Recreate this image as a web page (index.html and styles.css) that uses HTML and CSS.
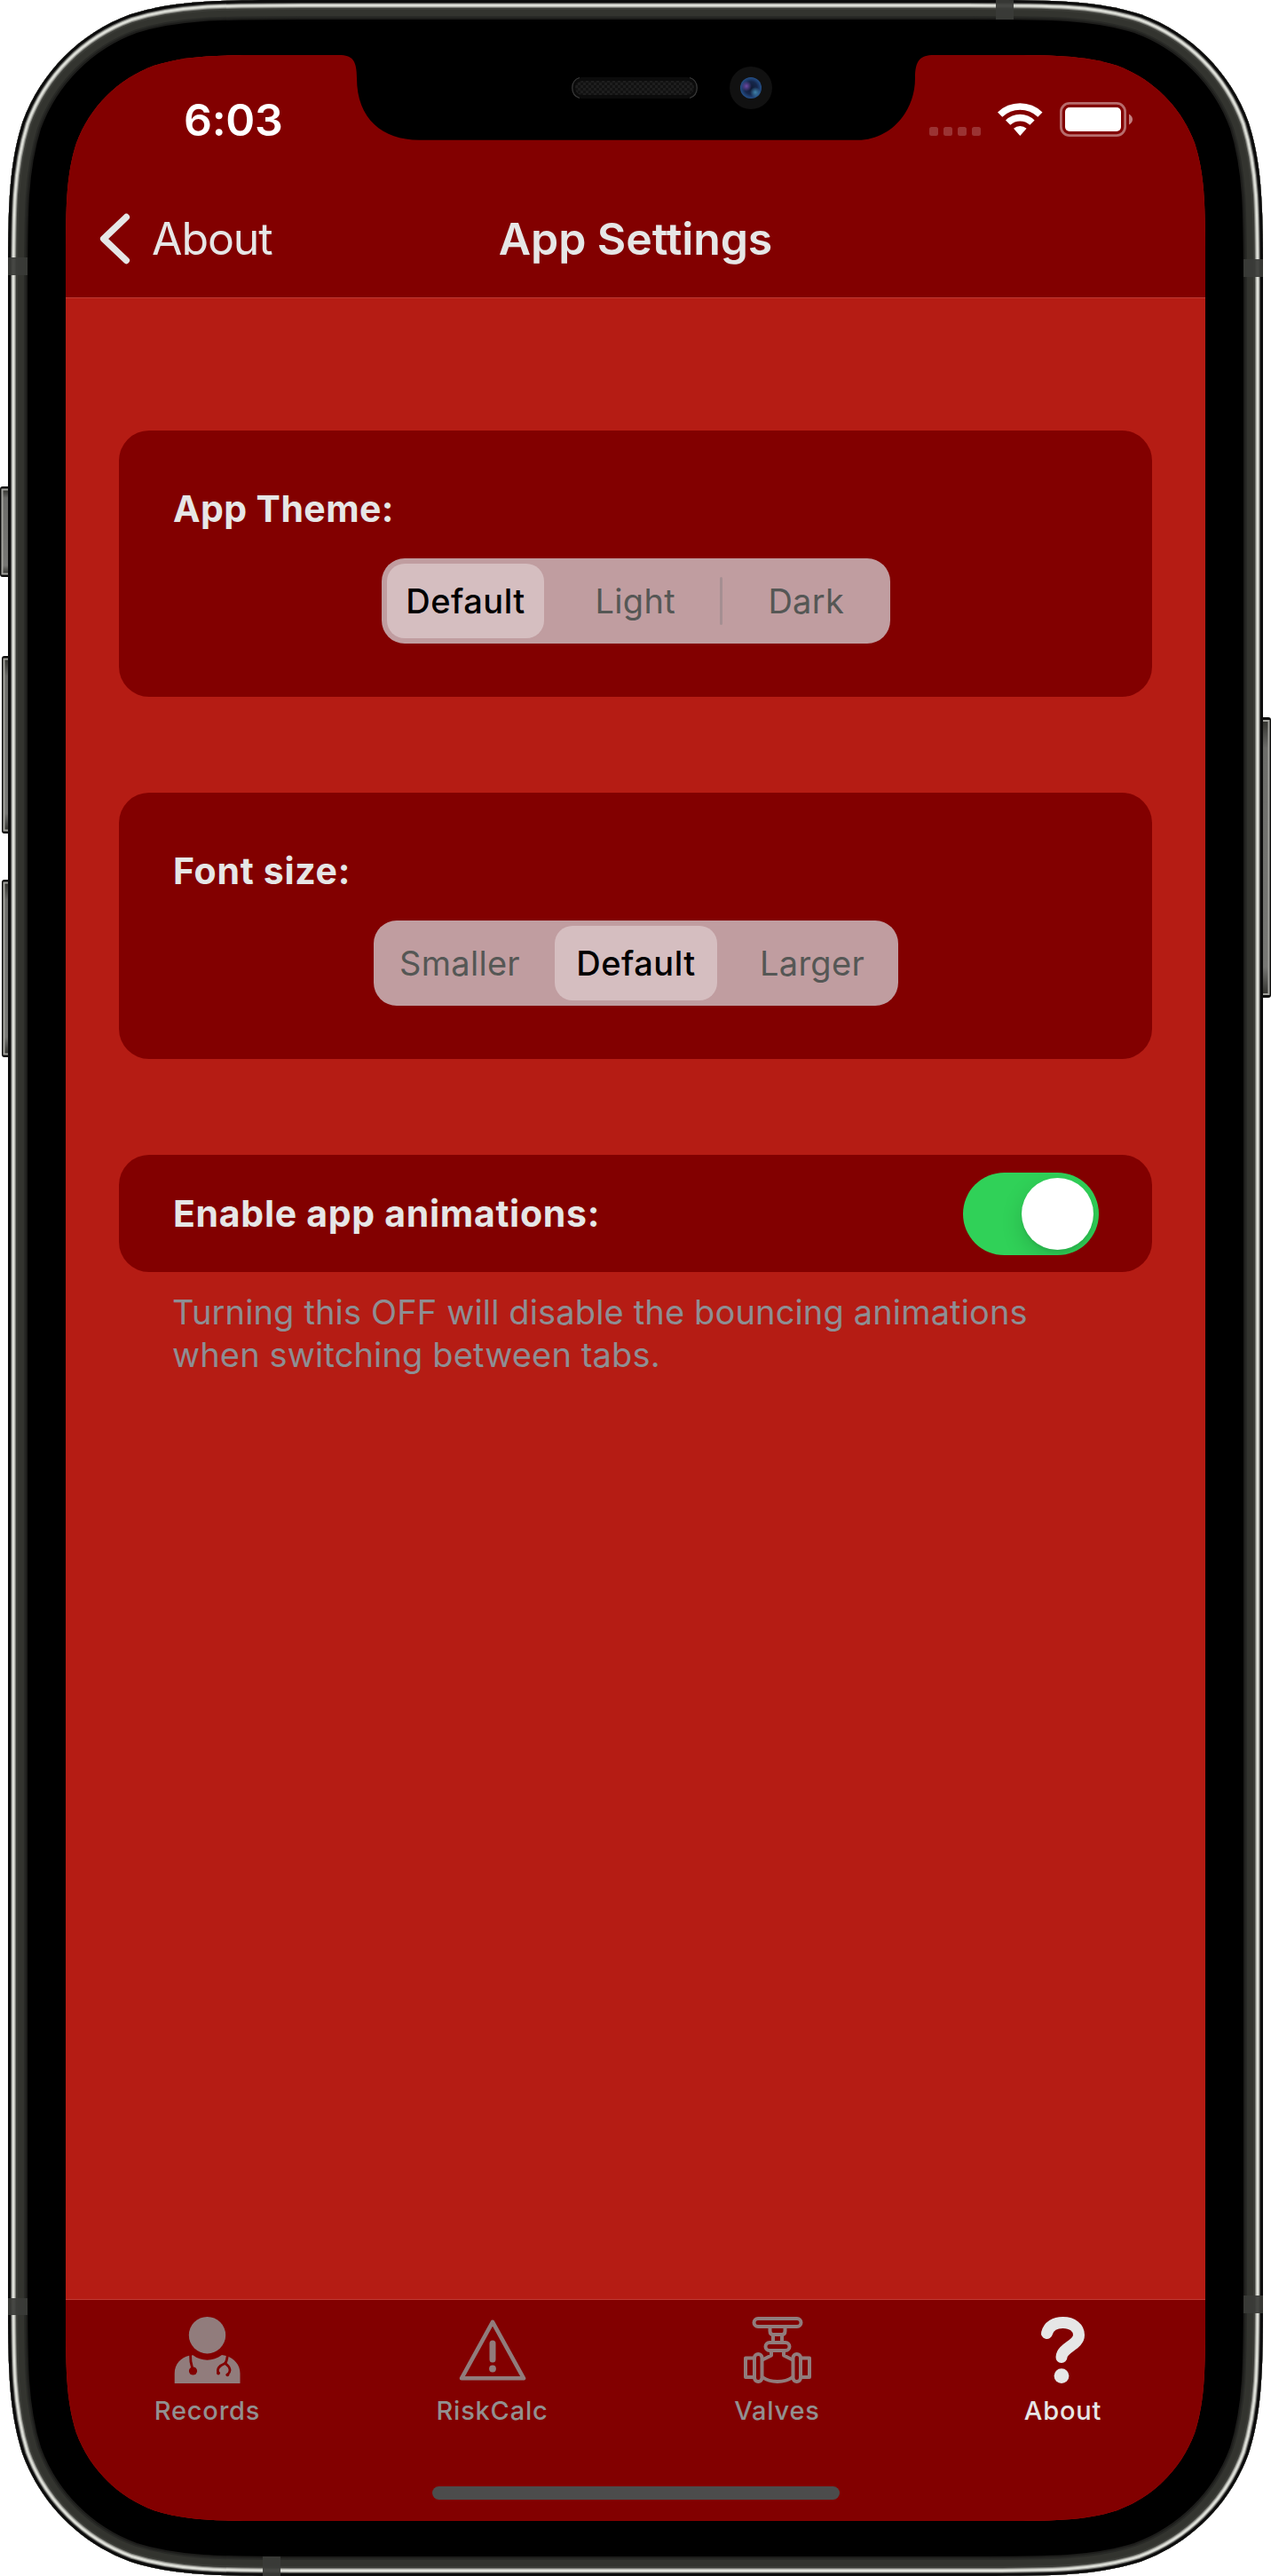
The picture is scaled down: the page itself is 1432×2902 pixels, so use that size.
FILE: index.html
```html
<!DOCTYPE html>
<html lang="en">
<head>
<meta charset="utf-8">
<title>App Settings</title>
<link rel="stylesheet" href="styles.css">
</head>
<body>
<div class="device">
  <svg class="device-frame" viewBox="0 0 1432 2902" aria-hidden="true">
    <defs>
      <path id="shell" d="M342.2,0 H1089.8 C1185.7,0 1233.7,0 1285.3,16.3 C1341.7,36.9 1386.1,81.3 1406.7,137.7 C1423,189.3 1423,237.3 1423,333.2 V2568.8 C1423,2664.7 1423,2712.7 1406.7,2764.3 C1386.1,2820.7 1341.7,2865.1 1285.3,2885.7 C1233.7,2902 1185.7,2902 1089.8,2902 H342.2 C246.3,2902 198.3,2902 146.7,2885.7 C90.3,2865.1 45.9,2820.7 25.3,2764.3 C9,2712.7 9,2664.7 9,2568.8 V333.2 C9,237.3 9,189.3 25.3,137.7 C45.9,81.3 90.3,36.9 146.7,16.3 C198.3,0 246.3,0 342.2,0Z"/>
      <clipPath id="shell-clip"><use href="#shell"/></clipPath>
      <linearGradient id="key" x1="0" x2="0" y1="0" y2="1">
        <stop offset="0" stop-color="#33332f"/><stop offset=".1" stop-color="#6c6c69"/>
        <stop offset=".9" stop-color="#777774"/><stop offset="1" stop-color="#33332f"/>
      </linearGradient>
    </defs>
    <!-- side keys -->
    <g class="key">
      <rect x="1" y="549" width="20" height="100" rx="2"/>
      <rect x="3" y="740" width="20" height="198" rx="2"/>
      <rect x="3" y="992" width="20" height="198" rx="2"/>
      <rect x="1411" y="809" width="20" height="314" rx="2"/>
    </g>
    <g class="key-edge">
      <rect x="2.5" y="551.5" width="20" height="95"/>
      <rect x="4.5" y="742.5" width="20" height="193"/>
      <rect x="4.5" y="994.5" width="20" height="193"/>
      <rect x="1409.5" y="812" width="20" height="308"/>
    </g>
    <g clip-path="url(#shell-clip)" fill="none">
      <use href="#shell" fill="#000" stroke="#1d1d1b" stroke-width="44"/>
      <use href="#shell" stroke="#282926" stroke-width="40"/>
      <use href="#shell" stroke="#33342f" stroke-width="36"/>
      <use href="#shell" stroke="#3b3c37" stroke-width="22"/>
      <use href="#shell" stroke="#7c7d78" stroke-width="18"/>
      <use href="#shell" stroke="#b9bab3" stroke-width="16"/>
      <use href="#shell" stroke="#dfe1da" stroke-width="14"/>
      <use href="#shell" stroke="#a9aaa5" stroke-width="10"/>
      <use href="#shell" stroke="#555552" stroke-width="8"/>
      <use href="#shell" stroke="#0c0c0c" stroke-width="6"/>
      <g class="antenna">
        <rect x="1122" y="0" width="20" height="22"/>
        <rect x="296" y="2880" width="20" height="22"/>
        <rect x="9" y="290" width="22" height="20"/>
        <rect x="9" y="2589" width="22" height="19"/>
        <rect x="1401" y="292" width="22" height="20"/>
        <rect x="1401" y="2586" width="22" height="20"/>
      </g>
    </g>
  </svg>

  <main class="screen">
    <header class="header">
      <div class="status-bar">
        <span class="time">6:03</span>
        <svg class="status-icons" viewBox="0 0 230 40">
          <g fill="#9b3333">
            <rect x="0" y="28" width="10" height="10" rx="2.5"/><rect x="16" y="28" width="10" height="10" rx="2.5"/>
            <rect x="32" y="28" width="10" height="10" rx="2.5"/><rect x="48" y="28" width="10" height="10" rx="2.5"/>
          </g>
          <g fill="#fff">
            <path d="M77 11.500 A36 36 0 0 1 127.500 11.500 L122.300 16.800 A28.600 28.600 0 0 0 82.300 16.800Z"/>
            <path d="M86 20.500 A23.300 23.300 0 0 1 118.600 20.500 L113.300 25.800 A16 16 0 0 0 91.300 25.800Z"/>
            <path d="M95 29.700 A11.500 11.500 0 0 1 109.600 29.700 L102.300 38Z"/>
          </g>
          <rect x="148.400" y="1.400" width="72.200" height="36.200" rx="9.500" fill="none" stroke="#c17f7f" stroke-opacity=".85" stroke-width="2.800"/>
          <rect x="153" y="6" width="63" height="27" rx="5" fill="#fff"/>
          <path d="M225 13.500 Q229 16 229 19.500 Q229 23 225 25.500Z" fill="#c17f7f"/>
        </svg>
      </div>
      <nav class="nav-bar">
        <a class="back">
          <svg class="chevron" viewBox="0 0 38 58"><path d="M32.300 4.600 L6.700 29 L32.300 53.400"/></svg>
          <span class="back-text">About</span>
        </a>
        <h1 class="title">App Settings</h1>
      </nav>
    </header>

    <section class="content">
      <div class="card">
        <h2 class="label theme-label">App Theme:</h2>
        <div class="segmented theme">
          <span class="segment selected"><b>Default</b></span>
          <span class="segment"><b>Light</b></span>
          <i class="divider"></i>
          <span class="segment"><b>Dark</b></span>
        </div>
      </div>
      <div class="card">
        <h2 class="label">Font size:</h2>
        <div class="segmented size">
          <span class="segment"><b>Smaller</b></span>
          <span class="segment selected"><b>Default</b></span>
          <span class="segment"><b>Larger</b></span>
        </div>
      </div>
      <div class="card card-row">
        <h2 class="label">Enable app animations:</h2>
        <span class="toggle"><i class="knob"></i></span>
      </div>
      <p class="note">Turning this OFF will disable the bouncing animations<br>when switching between tabs.</p>
    </section>

    <footer class="footer">
      <nav class="tabs">
        <a class="tab">
          <svg class="tab-icon" viewBox="0 0 76 76">
            <circle cx="37.500" cy="20.700" r="20.700"/>
            <path d="M.7 75 V64 C.7 53 8 46 17 43.800 L21.500 43.200 C31 50.500 44 50.500 54 43 L59 44 C68 47 74.500 54 74.500 64 V75Z"/>
            <g class="cut">
              <path d="M18.500 42 C18.200 49 19 53 21 59"/><path d="M60.500 42 C60 47 59 51 57.500 52.500 C51 55 48 59 50 63"/>
              <path d="M57.500 52.500 C63 56 65 61 60.500 65"/>
            </g>
            <g class="cut-dot"><circle cx="21.500" cy="61" r="4.600"/><circle cx="50" cy="63.500" r="1.900"/><circle cx="60.300" cy="65.300" r="1.900"/></g>
          </svg>
          <span class="tab-text">Records</span>
        </a>
        <a class="tab">
          <svg class="tab-icon line" viewBox="0 0 76 76">
            <path stroke-width="4.600" d="M38 5.800 L73 69.300 H3Z"/>
            <path stroke-width="7" d="M38 30 V48"/><circle class="solid" cx="38" cy="58.500" r="3.900"/>
          </svg>
          <span class="tab-text">RiskCalc</span>
        </a>
        <a class="tab">
          <svg class="tab-icon line valve" viewBox="0 0 76 76">
            <rect x="11.500" y="2" width="53" height="9" rx="4.500"/>
            <path d="M29.500 12 V16 Q29.500 20 33 20 H43 Q46.500 20 46.500 16 V12"/>
            <path d="M33 20 V28 M43 20 V28"/>
            <rect x="24.500" y="29" width="27" height="9" rx="4.500"/>
            <path d="M31 39 V43.500 L22 48 M45 39 V43.500 L54 48"/>
            <rect x="12" y="42" width="8.500" height="31" rx="4.250"/>
            <rect x="55.500" y="42" width="8.500" height="31" rx="4.250"/>
            <path d="M11 46.500 H2 V68 H11 M65 46.500 H74 V68 H65"/>
            <path d="M21 68 C30 74.500 46 74.500 55 68"/>
          </svg>
          <span class="tab-text">Valves</span>
        </a>
        <a class="tab active">
          <svg class="tab-icon line" viewBox="0 0 76 76">
            <path stroke-width="13" d="M19.500 18.500 C21.500 10.500 28.500 6.500 37.500 6.500 C48.500 6.500 55.500 12.500 55.500 20.500 C55.500 32 36.500 34.500 36 45.500"/>
            <circle class="solid" cx="36" cy="66.600" r="8.400"/>
          </svg>
          <span class="tab-text">About</span>
        </a>
      </nav>
      <div class="home-indicator"></div>
    </footer>
  </main>

  <svg class="notch" viewBox="382 60 672 100" aria-hidden="true">
    <defs>
      <radialGradient id="lens"><stop offset="0" stop-color="#0f1a33"/><stop offset=".6" stop-color="#16274c"/><stop offset="1" stop-color="#24508a"/></radialGradient>
      <radialGradient id="glow-a"><stop offset="0" stop-color="#6f4aa5"/><stop offset="1" stop-color="#6f4aa5" stop-opacity="0"/></radialGradient>
      <radialGradient id="glow-b"><stop offset="0" stop-color="#3f84ad"/><stop offset="1" stop-color="#3f84ad" stop-opacity="0"/></radialGradient>
      <pattern id="mesh" width="6" height="6" patternUnits="userSpaceOnUse"><rect width="6" height="6" fill="#121212"/><rect width="3" height="3" fill="#1e1e1e"/><rect x="3" y="3" width="3" height="3" fill="#1e1e1e"/></pattern>
    </defs>
    <path d="M382 60 V62 C397 62 402 68 402 88 C402 134 431 157.700 472 157.700 H967 C1001 157.700 1031 128 1031 88 C1031 68 1037 62 1052 62 V60Z"/>
    <rect x="646" y="89" width="138" height="20" rx="10" fill="url(#mesh)" stroke="#0b0b0b" stroke-width="4"/>
    <path d="M653 87.500 C642 91 642 107 653 110.500 M777 87.500 C788 91 788 107 777 110.500" fill="none" stroke="#3a3a3a" stroke-width="1.200"/>
    <circle cx="846" cy="99" r="24" fill="#111"/>
    <circle cx="846" cy="99" r="12" fill="url(#lens)"/>
    <circle cx="841" cy="97" r="6" fill="url(#glow-a)"/>
    <circle cx="851" cy="104" r="6" fill="url(#glow-b)"/>
  </svg>
</div>
</body>
</html>
```
FILE: styles.css
```css
* { box-sizing: border-box; }

body {
  margin: 0;
  background: #fff;
  font-family: Inter, "Liberation Sans", sans-serif;
  color: #e6e6e6;
}

h1, h2, p { margin: 0; }

.device {
  position: relative;
  width: 1432px;
  height: 2902px;
  padding: 62px 74px;
  overflow: hidden;
}

.device-frame {
  position: absolute;
  inset: 0;
  width: 1432px;
  height: 2902px;
}

.key rect { fill: #0d0d0c; stroke: #0d0d0c; stroke-width: 2; }
.key-edge rect { fill: url(#key); stroke: #a3a39e; stroke-width: 2; }
.antenna rect { fill: #3a3b38; fill-opacity: .93; }

.notch {
  position: absolute;
  left: 382px;
  top: 60px;
  width: 672px;
  height: 100px;
}

.screen {
  position: relative;
  display: flex;
  flex-direction: column;
  width: 1284px;
  height: 2778px;
  background: #b51c14;
  clip-path: path("M241.5,0 H1042.5 C1112,0 1146.8,0 1184.2,11.8 C1225.1,26.7 1257.3,58.9 1272.2,99.8 C1284,137.2 1284,172 1284,241.5 V2536.5 C1284,2606 1284,2640.8 1272.2,2678.2 C1257.3,2719.1 1225.1,2751.3 1184.2,2766.2 C1146.8,2778 1112,2778 1042.5,2778 H241.5 C172,2778 137.2,2778 99.8,2766.2 C58.9,2751.3 26.7,2719.1 11.8,2678.2 C0,2640.8 0,2606 0,2536.5 V241.5 C0,172 0,137.2 11.8,99.8 C26.7,58.9 58.9,26.7 99.8,11.8 C137.2,0 172,0 241.5,0Z");
}

.header {
  height: 274px;
  background: #820000;
  border-bottom: 1px solid #c03a33;
}

.status-bar {
  display: flex;
  justify-content: space-between;
  align-items: flex-start;
  height: 141px;
  padding: 43px 81px 0 133px;
}

.time {
  color: #fff;
  font-size: 50px;
  font-weight: 600;
  letter-spacing: -.3px;
  line-height: 60px;
}

.status-icons { width: 230px; height: 40px; margin-top: 10px; }

.nav-bar {
  display: grid;
  grid-template-columns: 1fr auto 1fr;
  align-items: center;
  height: 132px;
  padding: 0 36px;
}

.back { display: flex; align-items: center; gap: 23px; }
.chevron { width: 38px; height: 58px; fill: none; stroke: #e6e6e6; stroke-width: 7.5; stroke-linecap: round; stroke-linejoin: round; }
.back-text { font-size: 50px; font-weight: 400; letter-spacing: -1.1px; line-height: 60px; }
.title { font-size: 50px; font-weight: 600; letter-spacing: -.1px; line-height: 60px; }

.content {
  flex: 1;
  display: flex;
  flex-direction: column;
  gap: 108px;
  padding: 149px 60px 0;
}

.card {
  height: 300px;
  padding: 62px 60px 0 61px;
  border-radius: 34px;
  background: #820000;
}

.label { font-size: 41px; font-weight: 700; letter-spacing: .7px; line-height: 52px; }
.theme-label { letter-spacing: .4px; }

.segmented {
  display: flex;
  align-items: center;
  height: 96px;
  margin: 30px auto 0;
  padding: 6px 0;
  border-radius: 26px;
  background: #c09da0;
}

.theme { width: 573px; padding-left: 6px; }
.size { width: 591px; }

.segment {
  flex: 1;
  display: flex;
  align-items: center;
  justify-content: center;
  height: 84px;
  color: #555755;
}

.segment b { font-size: 38px; font-weight: 400; letter-spacing: .3px; }
.segment.selected { flex: none; border-radius: 20px; background: #d5bec0; color: #000; }
.segment.selected b { font-weight: 500; letter-spacing: .5px; }
.theme .selected { width: 177px; margin-right: 8px; }
.size .selected { width: 183px; margin: 0 10px; }
.divider { width: 3px; height: 54px; border-radius: 2px; background: #a58f92; }

.card-row {
  display: flex;
  align-items: center;
  justify-content: space-between;
  height: 132px;
  padding: 0 60px 0 61px;
}

.toggle {
  display: flex;
  align-items: center;
  justify-content: flex-end;
  width: 153px;
  height: 93px;
  padding: 6px;
  border-radius: 47px;
  background: #30d158;
  overflow: hidden;
}

.knob {
  width: 81px;
  height: 81px;
  border-radius: 50%;
  background: #fff;
  box-shadow: 0 9px 24px rgba(0, 0, 0, .15), 0 3px 3px rgba(0, 0, 0, .06);
}

.note {
  margin-top: -87px;
  padding: 0 60px;
  color: #8e8e93;
  font-size: 38px;
  letter-spacing: .15px;
  line-height: 48px;
  white-space: nowrap;
}

.footer {
  height: 250px;
  border-top: 1px solid #c03a33;
  background: #820000;
}

.tabs { display: grid; grid-template-columns: repeat(4, 1fr); height: 210px; }

.tab {
  display: flex;
  flex-direction: column;
  align-items: center;
  padding: 19px 2px 0 0;
  color: #929090;
  fill: #917c7c;
  stroke: #917c7c;
}

.tab-icon { width: 76px; height: 76px; stroke: none; }
.tab-icon.line { fill: none; stroke: inherit; stroke-linecap: round; stroke-linejoin: round; }
.tab-icon.valve { stroke-width: 4; }
.tab .solid { fill: #917c7c; stroke: none; }
.tab .cut { fill: none; stroke: #820000; stroke-width: 2.8; stroke-linecap: round; }
.tab .cut-dot { fill: #820000; }
.tab.active { padding-right: 0; color: #e6e6e6; stroke: #e6e6e6; }
.tab.active .solid { fill: #e6e6e6; }

.tab-text { margin-top: 12px; font-size: 29px; font-weight: 500; letter-spacing: .8px; line-height: 36px; }

.home-indicator {
  width: 459px;
  height: 15px;
  margin: 0 auto;
  border-radius: 8px;
  background: #4c4c4c;
}
```
